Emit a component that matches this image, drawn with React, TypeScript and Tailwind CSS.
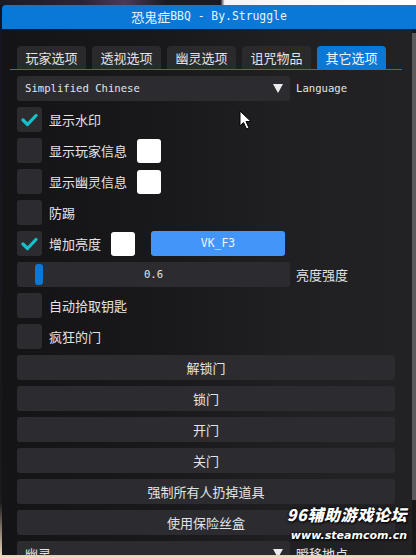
import React from "react";

const cjk = "font-['Noto_Sans_CJK_SC',sans-serif] text-[13px]";
const mono = "font-['DejaVu_Sans_Mono','Noto_Sans_CJK_SC',monospace] text-[10.6px]";

function Check({ on }: { on?: boolean }) {
  return (
    <div className="flex h-[25px] w-[25px] shrink-0 items-center justify-center rounded-[3px] bg-[#2c2c30]">
      {on && (
        <svg width="17" height="14" viewBox="0 0 17 14">
          <polyline points="2,7 6.5,11.5 15,2.5" fill="none" stroke="#16c0c8" strokeWidth="3.2" strokeLinecap="round" strokeLinejoin="round" />
        </svg>
      )}
    </div>
  );
}

function Swatch() {
  return <div className="h-[24px] w-[24px] shrink-0 rounded-[3px] bg-white" />;
}

function Row({ label, on, children }: { label: string; on?: boolean; children?: React.ReactNode }) {
  return (
    <div className="flex h-[25px] items-center">
      <Check on={on} />
      <span className={`ml-[7px] text-[#e4e4e6] ${cjk}`}>{label}</span>
      {children}
    </div>
  );
}

function Arrow() {
  return (
    <svg width="10" height="9" viewBox="0 0 10 9" className="shrink-0">
      <polygon points="0,0 10,0 5,9" fill="#ececec" />
    </svg>
  );
}

function Combo({ text, label, latin }: { text: string; label: string; latin?: boolean }) {
  return (
    <div className="flex h-[25px] items-center">
      <div className="flex h-[25px] w-[273px] items-center justify-between rounded-[3px] bg-[#2c2c30] pl-[8px] pr-[7px]">
        <span className={`text-[#e4e4e6] ${latin ? mono : cjk}`}>{text}</span>
        <Arrow />
      </div>
      <span className={`ml-[6px] text-[#e4e4e6] ${latin ? mono : cjk}`}>{label}</span>
    </div>
  );
}

function Btn({ text }: { text: string }) {
  return (
    <div className={`flex h-[25px] w-[378px] items-center justify-center rounded-[3px] bg-[#2c2c30] text-[#e4e4e6] ${cjk}`}>
      {text}
    </div>
  );
}

const tabs = ["玩家选项", "透视选项", "幽灵选项", "诅咒物品", "其它选项"];

export default function App() {
  return (
    <div className="relative h-[558px] w-[416px] overflow-hidden bg-[linear-gradient(180deg,#151520_0%,#1a1a1c_90%,#f2dcc4_100%)]">
      <div className="absolute left-0 top-0 h-[5px] w-full bg-[linear-gradient(90deg,#1b1b24_0%,#2b2438_20%,#4a3a5a_30%,#1a1a22_40%,#1a1a22_53%,#f4f4f6_54%,#ffffff_100%)]" />
      <div className="ml-[2px] mt-[5px] flex h-[550px] w-[414px] flex-col overflow-hidden rounded-tl-[4px] bg-[#1f1f21]">
        <div className="flex h-[24px] shrink-0 items-center justify-center bg-[#0a78d7] text-[#eef2f8]">
          <span className={cjk}>恐鬼症</span>
          <span className="font-['DejaVu_Sans_Mono',monospace] text-[11.4px]">BBQ - By.Struggle</span>
        </div>
        <div className="flex min-h-0 flex-1">
          <div className="flex-1 bg-[linear-gradient(90deg,#141416_0%,#19191b_40%,#202022_70%,#222224_100%)] pl-[15px] pt-[17px]">
            <div className="flex gap-[6px]">
              {tabs.map((t, i) => (
                <div
                  key={t}
                  className={`flex h-[23px] w-[69px] items-center justify-center rounded-t-[4px] ${cjk} ${
                    i === 4 ? "bg-[#0a78d7] text-[#f2f6fb]" : "bg-[#2a2a2d] text-[#e4e4e6]"
                  }`}
                >
                  {t}
                </div>
              ))}
            </div>
            <div className="-ml-[7px] h-px w-[392px] bg-[#0a78d7]" />
            <div className="mt-[6px] flex flex-col gap-[6px]">
              <Combo text="Simplified Chinese" label="Language" latin />
              <Row label="显示水印" on />
              <Row label="显示玩家信息">
                <div className="ml-[10px]"><Swatch /></div>
              </Row>
              <Row label="显示幽灵信息">
                <div className="ml-[10px]"><Swatch /></div>
              </Row>
              <Row label="防踢" />
              <Row label="增加亮度" on>
                <div className="ml-[10px]"><Swatch /></div>
                <div className={`ml-[16px] flex h-[25px] w-[134px] items-center justify-center rounded-[3px] bg-[#4296fa] text-[#eef4fc] ${mono} text-[11.4px]`}>
                  VK_F3
                </div>
              </Row>
              <div className="flex h-[25px] items-center">
                <div className="relative flex h-[25px] w-[273px] items-center justify-center rounded-[3px] bg-[#2c2c30]">
                  <div className="absolute left-[18px] top-[2px] h-[21px] w-[8px] rounded-[3px] bg-[#0a78d7]" />
                  <span className={`text-[#e4e4e6] ${mono}`}>0.6</span>
                </div>
                <span className={`ml-[6px] text-[#e4e4e6] ${cjk}`}>亮度强度</span>
              </div>
              <Row label="自动拾取钥匙" />
              <Row label="疯狂的门" />
              <Btn text="解锁门" />
              <Btn text="锁门" />
              <Btn text="开门" />
              <Btn text="关门" />
              <Btn text="强制所有人扔掉道具" />
              <Btn text="使用保险丝盒" />
              <Combo text="幽灵" label="瞬移地点" />
            </div>
          </div>
          <div className="w-[4px] shrink-0 bg-[#19191a] pt-[4px]">
            <div className="h-[467px] w-[4px] bg-[#5a5a5c]" />
          </div>
        </div>
      </div>

      <svg className="absolute left-[239px] top-[110px]" width="13" height="20" viewBox="0 0 13 20">
        <polygon points="1,1 1,16 4.5,12.5 7.5,19 10,18 7,11.5 12,11.5" fill="#ffffff" stroke="#000000" strokeWidth="1" strokeLinejoin="round" />
      </svg>

      <div className="absolute right-[9px] top-[503px] flex flex-col items-end gap-[3px] italic text-white [text-shadow:0_0_3px_#000,1px_1px_2px_#000]">
        <span className="font-['Noto_Sans_CJK_SC',sans-serif] text-[16px] font-black leading-[22px] tracking-[0.6px]">96辅助游戏论坛</span>
        <span className="font-['DejaVu_Sans',sans-serif] text-[11px] font-bold leading-[16px]">www.steamcom.cn</span>
      </div>
    </div>
  );
}
